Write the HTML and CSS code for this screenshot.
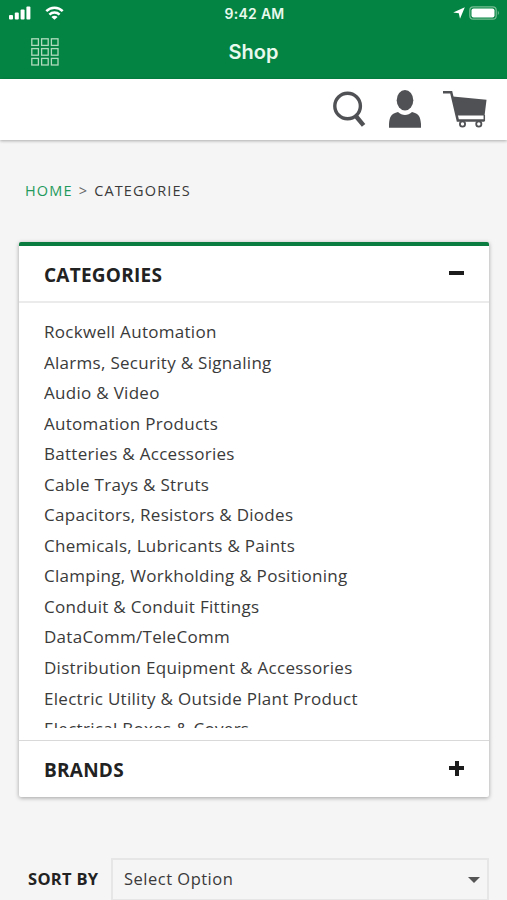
FILE: index.html
```
<!DOCTYPE html>
<html lang="en">
<head>
    <meta charset="UTF-8">
    <meta name="viewport" content="width=device-width, initial-scale=1.0">
    <title>Shop</title>
    <link rel="stylesheet" href="styles.css">
</head>
<body>

<header class="app-header">
    <div class="status-bar">
        <div class="status-left">
            <svg class="signal" width="22" height="14" viewBox="0 0 22 14" fill="#fff">
                <rect x="0" y="9" width="4" height="4.5" rx="1"/>
                <rect x="5.8" y="6.5" width="4" height="7" rx="1"/>
                <rect x="11.6" y="3.5" width="4" height="10" rx="1"/>
                <rect x="17.4" y="0.5" width="4" height="13" rx="1"/>
            </svg>
            <svg class="wifi" width="19" height="14" viewBox="0 0 19 14">
                <path d="M1.3 5.2C5.8 0.6 13.2 0.6 17.7 5.2M4.4 8.6C7.2 5.9 11.8 5.9 14.6 8.6" fill="none" stroke="#fff" stroke-width="2.5"/>
                <path d="M9.5 13.8L6.4 10.9C8 9.3 11 9.3 12.6 10.9Z" fill="#fff"/>
            </svg>
        </div>
        <span class="time">9:42 AM</span>
        <div class="status-right">
            <svg width="12" height="12" viewBox="0 0 12 12" fill="#fff">
                <path d="M11.8 0.2L7 11.8L5.8 6.3L0.2 5.4Z"/>
            </svg>
            <svg class="battery" width="31" height="14" viewBox="0 0 31 14">
                <rect x="0.8" y="0.8" width="26.4" height="12.4" rx="3.5" fill="none" stroke="#75bd93" stroke-width="1.2"/>
                <rect x="2.5" y="2.5" width="23" height="9" rx="2" fill="#fff"/>
                <path d="M28.8 4.8Q31 7 28.8 9.2Z" fill="#75bd93"/>
            </svg>
        </div>
    </div>
    <div class="title-bar">
        <svg class="menu-icon" width="28" height="28" viewBox="0 0 28 28" fill="none" stroke="#b0dabd" stroke-width="1.3">
            <rect x="0.8" y="0.8" width="6.6" height="6.6"/>
            <rect x="10.6" y="0.8" width="6.6" height="6.6"/>
            <rect x="20.4" y="0.8" width="6.6" height="6.6"/>
            <rect x="0.8" y="10.6" width="6.6" height="6.6"/>
            <rect x="10.6" y="10.6" width="6.6" height="6.6"/>
            <rect x="20.4" y="10.6" width="6.6" height="6.6"/>
            <rect x="0.8" y="20.4" width="6.6" height="6.6"/>
            <rect x="10.6" y="20.4" width="6.6" height="6.6"/>
            <rect x="20.4" y="20.4" width="6.6" height="6.6"/>
        </svg>
        <h1>Shop</h1>
    </div>
</header>

<nav class="toolbar">
    <svg class="search-icon" width="33" height="37" viewBox="0 0 33 37" fill="none" stroke="#505154">
        <circle cx="14.6" cy="15" r="12.8" stroke-width="3.4"/>
        <path d="M22.8 25L30.6 34.4" stroke-width="4.4"/>
    </svg>
    <svg class="user-icon" width="34" height="39" viewBox="0 0 34 39" fill="#505154">
        <ellipse cx="17" cy="10.2" rx="8.3" ry="10.2"/>
        <path d="M1 37.8V34C1.6 26.5 3.3 23.5 10 22C14 26 20 26 24 22C30.7 23.5 32.4 26.5 33 34V37.8Z"/>
    </svg>
    <svg class="cart-icon" width="44" height="38" viewBox="0 0 44 38">
        <path d="M0 2.2H8.2L14.8 30.4H41.5" fill="none" stroke="#505154" stroke-width="2.5"/>
        <path d="M9.8 6.5L43.5 9.7L41.6 25.5H14Z" fill="#505154"/>
        <path d="M41.3 25V31" stroke="#505154" stroke-width="1.5"/>
        <circle cx="19.5" cy="34" r="2.6" fill="#fff" stroke="#505154" stroke-width="1.8"/>
        <circle cx="35.8" cy="34" r="2.6" fill="#fff" stroke="#505154" stroke-width="1.8"/>
    </svg>
</nav>

<main>
    <div class="breadcrumb">
        <a href="#">HOME</a><span class="sep">&gt;</span><span>CATEGORIES</span>
    </div>

    <div class="card">
        <div class="card-header">
            <h2>CATEGORIES</h2>
            <span class="toggle minus"></span>
        </div>
        <div class="card-body">
            <ul>
                <li>Rockwell Automation</li>
                <li>Alarms, Security &amp; Signaling</li>
                <li>Audio &amp; Video</li>
                <li>Automation Products</li>
                <li>Batteries &amp; Accessories</li>
                <li>Cable Trays &amp; Struts</li>
                <li>Capacitors, Resistors &amp; Diodes</li>
                <li>Chemicals, Lubricants &amp; Paints</li>
                <li>Clamping, Workholding &amp; Positioning</li>
                <li>Conduit &amp; Conduit Fittings</li>
                <li>DataComm/TeleComm</li>
                <li>Distribution Equipment &amp; Accessories</li>
                <li>Electric Utility &amp; Outside Plant Product</li>
                <li>Electrical Boxes &amp; Covers</li>
            </ul>
        </div>
        <div class="card-header brands">
            <h2>BRANDS</h2>
            <span class="toggle plus"></span>
        </div>
    </div>

    <div class="sort-row">
        <span class="sort-label">SORT BY</span>
        <div class="select">
            <span>Select Option</span>
            <span class="caret"></span>
        </div>
    </div>
</main>

</body>
</html>
```
FILE: styles.css
```
* {
    box-sizing: border-box;
}
body {
    margin: 0;
    height: 900px;
    overflow: hidden;
    background: #f5f5f5;
    color: #3a3a3a;
    font-family: "Open Sans", "Noto Sans", sans-serif;
}
h1, h2, ul {
    margin: 0;
    padding: 0;
}
svg {
    display: block;
    flex-shrink: 0;
}
.app-header {
    height: 79px;
    background: #048443;
    color: #e9f9ee;
    font-family: Inter, sans-serif;
}
.status-bar, .title-bar {
    display: grid;
    grid-template-columns: 1fr auto 1fr;
    align-items: center;
}
.status-bar {
    height: 26px;
    padding: 0 7px 0 9px;
}
.status-left, .status-right {
    display: flex;
    align-items: center;
}
.wifi {
    margin-left: 14px;
}
.status-right {
    justify-content: flex-end;
    gap: 4px;
}
.time {
    padding-top: 1px;
    font-size: 14px;
    font-weight: 600;
    letter-spacing: 0.3px;
}
.title-bar {
    height: 52px;
    padding: 0 31px;
}
.title-bar h1 {
    padding-top: 1px;
    font-size: 20px;
    font-weight: 600;
    line-height: 51px;
}
.toolbar {
    display: flex;
    justify-content: flex-end;
    align-items: flex-start;
    height: 61px;
    padding: 11px 20px 0 0;
    background: #fff;
    box-shadow: 0 1px 3px rgba(0, 0, 0, 0.3);
}
.search-icon {
    margin: 1px 22px 0 0;
}
.user-icon {
    margin-right: 21px;
}
.breadcrumb {
    padding: 40px 25px 0;
    font-size: 14.5px;
    line-height: 22px;
    letter-spacing: 1.15px;
}
.breadcrumb a {
    color: #1f9a5c;
    text-decoration: none;
}
.breadcrumb .sep {
    margin: 0 6px;
    color: #666;
}
.card {
    margin: 40px 18px 0 19px;
    border-top: 4px solid #0b7c40;
    border-radius: 2px;
    background: #fff;
    box-shadow: 0 1px 4px rgba(0, 0, 0, 0.35);
}
.card-header {
    display: flex;
    justify-content: space-between;
    align-items: center;
    height: 57px;
    padding: 0 25px;
    border-bottom: 2px solid #ebebeb;
}
.card-header h2 {
    padding-top: 2px;
    color: #222;
    font-size: 19px;
    font-weight: 700;
    letter-spacing: 0.25px;
}
.card-header.brands {
    height: 57px;
    border-top: 1px solid #d9d9d9;
    border-bottom: none;
}
.card-body {
    height: 437px;
    padding: 13px 25px 12px;
}
.card-body ul {
    height: 412px;
    overflow: hidden;
    list-style: none;
}
.card-body li {
    height: 30.55px;
    font-size: 17px;
    line-height: 31.2px;
    letter-spacing: 0.29px;
    white-space: nowrap;
}
.toggle {
    width: 15px;
    height: 15px;
    margin-bottom: 2px;
}
.minus {
    background: linear-gradient(#1c1c1c, #1c1c1c) center / 15px 4px no-repeat;
}
.plus {
    background:
        linear-gradient(#1c1c1c, #1c1c1c) center / 15px 4px no-repeat,
        linear-gradient(#1c1c1c, #1c1c1c) center / 4px 15px no-repeat;
}
.sort-row {
    display: flex;
    align-items: center;
    margin: 61px 18px 0 28px;
}
.sort-label {
    width: 83px;
    padding-bottom: 2px;
    color: #222;
    font-size: 16.5px;
    font-weight: 700;
    letter-spacing: 0.3px;
}
.select {
    display: flex;
    flex: 1;
    justify-content: space-between;
    align-items: center;
    height: 43px;
    padding: 0 7px 2px 11px;
    border: 2px solid #e6e6e6;
    font-size: 16.5px;
    letter-spacing: 0.5px;
}
.caret {
    margin-top: 2px;
    border: 6px solid transparent;
    border-top-color: #555;
    border-bottom: none;
}
```
